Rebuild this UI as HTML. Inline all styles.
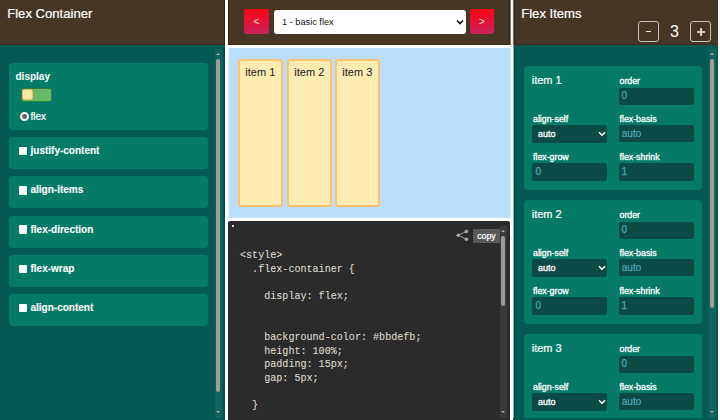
<!DOCTYPE html>
<html><head><meta charset="utf-8">
<style>
html,body{margin:0;padding:0;width:720px;height:420px;overflow:hidden;background:#fff;}
.b{position:absolute;box-sizing:border-box;}
.t{position:absolute;white-space:nowrap;line-height:1;}
body{font-family:"Liberation Sans", sans-serif;}
</style></head><body>
<div class="b" style="left:0px;top:0px;width:225px;height:420px;background:#035a55;"></div>
<div class="b" style="left:0px;top:0px;width:225px;height:45px;background:#463724;"></div>
<div class="t" style="left:7.2px;top:6.81px;font-size:13.1px;color:#fff;font-weight:normal;font-family:'Liberation Sans', sans-serif;-webkit-text-stroke:0.2px #fff;">Flex Container</div>
<div class="b" style="left:9px;top:62.5px;width:199px;height:67px;background:#047a67;border-radius:4px;"></div>
<div class="t" style="left:15.5px;top:71.94px;font-size:10px;color:#fff;font-weight:bold;font-family:'Liberation Sans', sans-serif;">display</div>
<div class="b" style="left:20.9px;top:87.7px;width:31.3px;height:14.4px;background:#66bb6a;border:1px solid #2f7d36;border-radius:2.5px;"></div>
<div class="b" style="left:22.3px;top:89.2px;width:10.8px;height:11.3px;background:#ffe7a6;border:1px solid #f0b860;border-radius:2.5px;"></div>
<div class="b" style="left:19.9px;top:111.9px;width:8.8px;height:8.8px;background:#666262;border:2.1px solid #faf4f4;border-radius:50%;"></div>
<div class="t" style="left:30.5px;top:111.94px;font-size:10px;color:#fff;font-weight:normal;font-family:'Liberation Sans', sans-serif;-webkit-text-stroke:0.2px #fff;">flex</div>
<div class="b" style="left:9px;top:137.0px;width:199px;height:32px;background:#047a67;border-radius:4px;"></div>
<div class="b" style="left:19px;top:146.8px;width:8.3px;height:8.5px;background:#fff;border-radius:1px;"></div>
<div class="t" style="left:30.5px;top:146.03px;font-size:10px;color:#fff;font-weight:bold;font-family:'Liberation Sans', sans-serif;-webkit-text-stroke:0.1px #fff;">justify-content</div>
<div class="b" style="left:9px;top:176.2px;width:199px;height:32px;background:#047a67;border-radius:4px;"></div>
<div class="b" style="left:19px;top:186.1px;width:8.3px;height:8.5px;background:#fff;border-radius:1px;"></div>
<div class="t" style="left:30.5px;top:185.28px;font-size:10px;color:#fff;font-weight:bold;font-family:'Liberation Sans', sans-serif;-webkit-text-stroke:0.1px #fff;">align-items</div>
<div class="b" style="left:9px;top:215.5px;width:199px;height:32px;background:#047a67;border-radius:4px;"></div>
<div class="b" style="left:19px;top:225.3px;width:8.3px;height:8.5px;background:#fff;border-radius:1px;"></div>
<div class="t" style="left:30.5px;top:224.53px;font-size:10px;color:#fff;font-weight:bold;font-family:'Liberation Sans', sans-serif;-webkit-text-stroke:0.1px #fff;">flex-direction</div>
<div class="b" style="left:9px;top:254.8px;width:199px;height:32px;background:#047a67;border-radius:4px;"></div>
<div class="b" style="left:19px;top:264.6px;width:8.3px;height:8.5px;background:#fff;border-radius:1px;"></div>
<div class="t" style="left:30.5px;top:263.79px;font-size:10px;color:#fff;font-weight:bold;font-family:'Liberation Sans', sans-serif;-webkit-text-stroke:0.1px #fff;">flex-wrap</div>
<div class="b" style="left:9px;top:294.0px;width:199px;height:32px;background:#047a67;border-radius:4px;"></div>
<div class="b" style="left:19px;top:303.8px;width:8.3px;height:8.5px;background:#fff;border-radius:1px;"></div>
<div class="t" style="left:30.5px;top:303.04px;font-size:10px;color:#fff;font-weight:bold;font-family:'Liberation Sans', sans-serif;-webkit-text-stroke:0.1px #fff;">align-content</div>
<div class="b" style="left:215px;top:48.5px;width:7px;height:369.0px;background:rgba(255,255,255,0.06);"></div>
<div class="b" style="left:216px;top:52.5px;width:0;height:0;border-left:2.3px solid transparent;border-right:2.3px solid transparent;border-bottom:2.6px solid #b8b0b0;"></div>
<div class="b" style="left:216px;top:410.5px;width:0;height:0;border-left:2.3px solid transparent;border-right:2.3px solid transparent;border-top:2.6px solid #b8b0b0;"></div>
<div class="b" style="left:216.2px;top:59.1px;width:4px;height:333.3px;background:#a29c9c;border-radius:2px;"></div>
<div class="b" style="left:228px;top:0px;width:282px;height:45px;background:#463724;"></div>
<div class="b" style="left:228px;top:48px;width:282px;height:170px;background:#bbdefb;"></div>
<div class="b" style="left:510px;top:48px;width:1px;height:170px;background:#ddeefd;"></div>
<div class="b" style="left:510px;top:0px;width:1px;height:45px;background:#a39b92;"></div>
<div class="b" style="left:238.0px;top:58.6px;width:45px;height:148.6px;background:#ffecb3;border:2px solid #ffc070;border-radius:3.5px;"></div>
<div class="t" style="left:245.3px;top:67.39px;font-size:11px;color:#1a1a1a;font-weight:normal;font-family:'Liberation Sans', sans-serif;">item 1</div>
<div class="b" style="left:287.0px;top:58.6px;width:45px;height:148.6px;background:#ffecb3;border:2px solid #ffc070;border-radius:3.5px;"></div>
<div class="t" style="left:294.3px;top:67.39px;font-size:11px;color:#1a1a1a;font-weight:normal;font-family:'Liberation Sans', sans-serif;">item 2</div>
<div class="b" style="left:335.0px;top:58.6px;width:45px;height:148.6px;background:#ffecb3;border:2px solid #ffc070;border-radius:3.5px;"></div>
<div class="t" style="left:342.3px;top:67.39px;font-size:11px;color:#1a1a1a;font-weight:normal;font-family:'Liberation Sans', sans-serif;">item 3</div>
<div class="b" style="left:244px;top:9px;width:25px;height:25px;background:linear-gradient(#ff0010,#c8245c);border-radius:2px;"></div>
<div class="t" style="left:253.5px;top:16.54px;font-size:10px;color:#ffe8d0;font-weight:normal;font-family:'Liberation Sans', sans-serif;">&lt;</div>
<div class="b" style="left:470px;top:9px;width:24px;height:25px;background:linear-gradient(#ff0010,#c8245c);border-radius:2px;"></div>
<div class="t" style="left:479px;top:16.54px;font-size:10px;color:#ffe8d0;font-weight:normal;font-family:'Liberation Sans', sans-serif;">&gt;</div>
<div class="b" style="left:273.5px;top:9.5px;width:192px;height:24.5px;background:#fff;border-radius:3px;"></div>
<div class="t" style="left:282.1px;top:18.21px;font-size:9.2px;color:#111;font-weight:normal;font-family:'Liberation Sans', sans-serif;">1 - basic flex</div>
<svg class="b" style="left:456px;top:17.5px" width="8" height="8" viewBox="0 0 8 8"><path d="M1 2.5 L4 5.5 L7 2.5" fill="none" stroke="#111" stroke-width="1.6"/></svg>
<div class="b" style="left:228px;top:221px;width:282px;height:199px;background:#2b2b2b;border-radius:2px 2px 0 0;"></div>
<div class="b" style="left:232px;top:225px;width:1.5px;height:1.5px;background:#ddd;"></div>
<div class="t" style="left:240px;top:251.47px;font-size:10.08px;color:#dedad0;font-weight:normal;font-family:'Liberation Mono', monospace;-webkit-text-stroke:0.1px #dedad0;">&lt;style&gt;</div>
<div class="t" style="left:240px;top:265.06px;font-size:10.08px;color:#dedad0;font-weight:normal;font-family:'Liberation Mono', monospace;-webkit-text-stroke:0.1px #dedad0;">&nbsp;&nbsp;.flex-container&nbsp;{</div>
<div class="t" style="left:240px;top:292.24px;font-size:10.08px;color:#dedad0;font-weight:normal;font-family:'Liberation Mono', monospace;-webkit-text-stroke:0.1px #dedad0;">&nbsp;&nbsp;&nbsp;&nbsp;display:&nbsp;flex;</div>
<div class="t" style="left:240px;top:333.01px;font-size:10.08px;color:#dedad0;font-weight:normal;font-family:'Liberation Mono', monospace;-webkit-text-stroke:0.1px #dedad0;">&nbsp;&nbsp;&nbsp;&nbsp;background-color:&nbsp;#bbdefb;</div>
<div class="t" style="left:240px;top:346.60px;font-size:10.08px;color:#dedad0;font-weight:normal;font-family:'Liberation Mono', monospace;-webkit-text-stroke:0.1px #dedad0;">&nbsp;&nbsp;&nbsp;&nbsp;height:&nbsp;100%;</div>
<div class="t" style="left:240px;top:360.19px;font-size:10.08px;color:#dedad0;font-weight:normal;font-family:'Liberation Mono', monospace;-webkit-text-stroke:0.1px #dedad0;">&nbsp;&nbsp;&nbsp;&nbsp;padding:&nbsp;15px;</div>
<div class="t" style="left:240px;top:373.78px;font-size:10.08px;color:#dedad0;font-weight:normal;font-family:'Liberation Mono', monospace;-webkit-text-stroke:0.1px #dedad0;">&nbsp;&nbsp;&nbsp;&nbsp;gap:&nbsp;5px;</div>
<div class="t" style="left:240px;top:400.96px;font-size:10.08px;color:#dedad0;font-weight:normal;font-family:'Liberation Mono', monospace;-webkit-text-stroke:0.1px #dedad0;">&nbsp;&nbsp;}</div>
<div class="b" style="left:473px;top:229px;width:26.5px;height:13.5px;background:#5a5a5a;"></div>
<div class="t" style="left:477.2px;top:231.65px;font-size:8.8px;color:#fff;font-weight:normal;font-family:'Liberation Sans', sans-serif;-webkit-text-stroke:0.2px #fff;">copy</div>
<svg class="b" style="left:456px;top:229px" width="13" height="13" viewBox="0 0 13 13"><g fill="#a4a4a4"><circle cx="10.4" cy="2.4" r="1.8"/><circle cx="2.3" cy="6.2" r="1.8"/><circle cx="10.4" cy="10.3" r="1.8"/></g><path d="M10.4 2.4 L2.3 6.2 L10.4 10.3" stroke="#a4a4a4" stroke-width="0.9" fill="none"/></svg>
<div class="b" style="left:500px;top:225.5px;width:7px;height:192.0px;background:#3a3a3a;"></div>
<div class="b" style="left:501px;top:229.5px;width:0;height:0;border-left:2.3px solid transparent;border-right:2.3px solid transparent;border-bottom:2.6px solid #aaa;"></div>
<div class="b" style="left:501px;top:410.5px;width:0;height:0;border-left:2.3px solid transparent;border-right:2.3px solid transparent;border-top:2.6px solid #aaa;"></div>
<div class="b" style="left:501.2px;top:235.6px;width:4px;height:70.19999999999999px;background:#9a9a9a;border-radius:2px;"></div>
<div class="b" style="left:513px;top:0px;width:205.5px;height:420px;background:#035a55;"></div>
<div class="b" style="left:513px;top:0px;width:205.5px;height:45px;background:#463724;"></div>
<div class="b" style="left:513px;top:45px;width:1px;height:375px;background:#82adaa;"></div>
<div class="b" style="left:513px;top:0px;width:1px;height:45px;background:#a39b92;"></div>
<div class="t" style="left:521.2px;top:6.81px;font-size:13.1px;color:#fff;font-weight:normal;font-family:'Liberation Sans', sans-serif;-webkit-text-stroke:0.2px #fff;">Flex Items</div>
<div class="b" style="left:638px;top:21px;width:21px;height:21px;background:transparent;border:1.5px solid #cdc5bb;border-radius:3px;"></div>
<div class="b" style="left:646.3px;top:30.5px;width:5px;height:1.6px;background:#f2eee8;"></div>
<div class="t" style="left:670px;top:23.86px;font-size:16px;color:#fff;font-weight:normal;font-family:'Liberation Sans', sans-serif;">3</div>
<div class="b" style="left:690px;top:21px;width:21px;height:21px;background:transparent;border:1.5px solid #cdc5bb;border-radius:3px;"></div>
<svg class="b" style="left:696px;top:26.5px" width="10" height="10" viewBox="0 0 10 10"><path d="M5 1 V9 M1 5 H9" stroke="#f2eee8" stroke-width="1.6"/></svg>
<div class="b" style="left:524px;top:65.8px;width:178px;height:124px;background:#047a67;border-radius:4px;"></div>
<div class="t" style="left:531.7px;top:74.99px;font-size:11px;color:#fff;font-weight:normal;font-family:'Liberation Sans', sans-serif;-webkit-text-stroke:0.2px #fff;">item 1</div>
<div class="t" style="left:619.5px;top:76.75px;font-size:8.8px;color:#fff;font-weight:normal;font-family:'Liberation Sans', sans-serif;-webkit-text-stroke:0.3px #fff;">order</div>
<div class="b" style="left:618.7px;top:87.5px;width:75px;height:17.2px;background:#0c4a45;border-radius:2px;"></div>
<div class="t" style="left:621.5px;top:90.73px;font-size:10px;color:#4aa8b8;font-weight:normal;font-family:'Liberation Sans', sans-serif;-webkit-text-stroke:0.25px #4aa8b8;">0</div>
<div class="t" style="left:533px;top:115.05px;font-size:8.8px;color:#fff;font-weight:normal;font-family:'Liberation Sans', sans-serif;-webkit-text-stroke:0.3px #fff;">align-self</div>
<div class="b" style="left:532.3px;top:125.3px;width:75px;height:17.4px;background:#0c4a45;border-radius:2px;"></div>
<div class="t" style="left:538px;top:130.08px;font-size:9px;color:#fff;font-weight:normal;font-family:'Liberation Sans', sans-serif;-webkit-text-stroke:0.3px #fff;">auto</div>
<svg class="b" style="left:598px;top:130.8px" width="8" height="6" viewBox="0 0 8 6"><path d="M1 1.2 L4 4.2 L7 1.2" fill="none" stroke="#fff" stroke-width="1.5"/></svg>
<div class="t" style="left:619.5px;top:115.05px;font-size:8.8px;color:#fff;font-weight:normal;font-family:'Liberation Sans', sans-serif;-webkit-text-stroke:0.3px #fff;">flex-basis</div>
<div class="b" style="left:618.7px;top:125.3px;width:75px;height:17.2px;background:#0c4a45;border-radius:2px;"></div>
<div class="t" style="left:621.8px;top:128.63px;font-size:10px;color:#4aa8b8;font-weight:normal;font-family:'Liberation Sans', sans-serif;-webkit-text-stroke:0.25px #4aa8b8;">auto</div>
<div class="t" style="left:533px;top:152.55px;font-size:8.8px;color:#fff;font-weight:normal;font-family:'Liberation Sans', sans-serif;-webkit-text-stroke:0.3px #fff;">flex-grow</div>
<div class="b" style="left:532.3px;top:163.1px;width:75px;height:17.5px;background:#0c4a45;border-radius:2px;"></div>
<div class="t" style="left:535.5px;top:167.13px;font-size:10px;color:#4aa8b8;font-weight:normal;font-family:'Liberation Sans', sans-serif;-webkit-text-stroke:0.25px #4aa8b8;">0</div>
<div class="t" style="left:619.5px;top:152.55px;font-size:8.8px;color:#fff;font-weight:normal;font-family:'Liberation Sans', sans-serif;-webkit-text-stroke:0.3px #fff;">flex-shrink</div>
<div class="b" style="left:618.7px;top:163.1px;width:75px;height:17.5px;background:#0c4a45;border-radius:2px;"></div>
<div class="t" style="left:621.5px;top:167.13px;font-size:10px;color:#4aa8b8;font-weight:normal;font-family:'Liberation Sans', sans-serif;-webkit-text-stroke:0.25px #4aa8b8;">1</div>
<div class="b" style="left:524px;top:199.8px;width:178px;height:124px;background:#047a67;border-radius:4px;"></div>
<div class="t" style="left:531.7px;top:208.99px;font-size:11px;color:#fff;font-weight:normal;font-family:'Liberation Sans', sans-serif;-webkit-text-stroke:0.2px #fff;">item 2</div>
<div class="t" style="left:619.5px;top:210.75px;font-size:8.8px;color:#fff;font-weight:normal;font-family:'Liberation Sans', sans-serif;-webkit-text-stroke:0.3px #fff;">order</div>
<div class="b" style="left:618.7px;top:221.5px;width:75px;height:17.2px;background:#0c4a45;border-radius:2px;"></div>
<div class="t" style="left:621.5px;top:224.74px;font-size:10px;color:#4aa8b8;font-weight:normal;font-family:'Liberation Sans', sans-serif;-webkit-text-stroke:0.25px #4aa8b8;">0</div>
<div class="t" style="left:533px;top:249.05px;font-size:8.8px;color:#fff;font-weight:normal;font-family:'Liberation Sans', sans-serif;-webkit-text-stroke:0.3px #fff;">align-self</div>
<div class="b" style="left:532.3px;top:259.3px;width:75px;height:17.4px;background:#0c4a45;border-radius:2px;"></div>
<div class="t" style="left:538px;top:264.08px;font-size:9px;color:#fff;font-weight:normal;font-family:'Liberation Sans', sans-serif;-webkit-text-stroke:0.3px #fff;">auto</div>
<svg class="b" style="left:598px;top:264.8px" width="8" height="6" viewBox="0 0 8 6"><path d="M1 1.2 L4 4.2 L7 1.2" fill="none" stroke="#fff" stroke-width="1.5"/></svg>
<div class="t" style="left:619.5px;top:249.05px;font-size:8.8px;color:#fff;font-weight:normal;font-family:'Liberation Sans', sans-serif;-webkit-text-stroke:0.3px #fff;">flex-basis</div>
<div class="b" style="left:618.7px;top:259.3px;width:75px;height:17.2px;background:#0c4a45;border-radius:2px;"></div>
<div class="t" style="left:621.8px;top:262.64px;font-size:10px;color:#4aa8b8;font-weight:normal;font-family:'Liberation Sans', sans-serif;-webkit-text-stroke:0.25px #4aa8b8;">auto</div>
<div class="t" style="left:533px;top:286.55px;font-size:8.8px;color:#fff;font-weight:normal;font-family:'Liberation Sans', sans-serif;-webkit-text-stroke:0.3px #fff;">flex-grow</div>
<div class="b" style="left:532.3px;top:297.1px;width:75px;height:17.5px;background:#0c4a45;border-radius:2px;"></div>
<div class="t" style="left:535.5px;top:301.14px;font-size:10px;color:#4aa8b8;font-weight:normal;font-family:'Liberation Sans', sans-serif;-webkit-text-stroke:0.25px #4aa8b8;">0</div>
<div class="t" style="left:619.5px;top:286.55px;font-size:8.8px;color:#fff;font-weight:normal;font-family:'Liberation Sans', sans-serif;-webkit-text-stroke:0.3px #fff;">flex-shrink</div>
<div class="b" style="left:618.7px;top:297.1px;width:75px;height:17.5px;background:#0c4a45;border-radius:2px;"></div>
<div class="t" style="left:621.5px;top:301.14px;font-size:10px;color:#4aa8b8;font-weight:normal;font-family:'Liberation Sans', sans-serif;-webkit-text-stroke:0.25px #4aa8b8;">1</div>
<div class="b" style="left:524px;top:333.8px;width:178px;height:124px;background:#047a67;border-radius:4px;"></div>
<div class="t" style="left:531.7px;top:342.99px;font-size:11px;color:#fff;font-weight:normal;font-family:'Liberation Sans', sans-serif;-webkit-text-stroke:0.2px #fff;">item 3</div>
<div class="t" style="left:619.5px;top:344.75px;font-size:8.8px;color:#fff;font-weight:normal;font-family:'Liberation Sans', sans-serif;-webkit-text-stroke:0.3px #fff;">order</div>
<div class="b" style="left:618.7px;top:355.5px;width:75px;height:17.2px;background:#0c4a45;border-radius:2px;"></div>
<div class="t" style="left:621.5px;top:358.74px;font-size:10px;color:#4aa8b8;font-weight:normal;font-family:'Liberation Sans', sans-serif;-webkit-text-stroke:0.25px #4aa8b8;">0</div>
<div class="t" style="left:533px;top:383.05px;font-size:8.8px;color:#fff;font-weight:normal;font-family:'Liberation Sans', sans-serif;-webkit-text-stroke:0.3px #fff;">align-self</div>
<div class="b" style="left:532.3px;top:393.3px;width:75px;height:17.4px;background:#0c4a45;border-radius:2px;"></div>
<div class="t" style="left:538px;top:398.08px;font-size:9px;color:#fff;font-weight:normal;font-family:'Liberation Sans', sans-serif;-webkit-text-stroke:0.3px #fff;">auto</div>
<svg class="b" style="left:598px;top:398.8px" width="8" height="6" viewBox="0 0 8 6"><path d="M1 1.2 L4 4.2 L7 1.2" fill="none" stroke="#fff" stroke-width="1.5"/></svg>
<div class="t" style="left:619.5px;top:383.05px;font-size:8.8px;color:#fff;font-weight:normal;font-family:'Liberation Sans', sans-serif;-webkit-text-stroke:0.3px #fff;">flex-basis</div>
<div class="b" style="left:618.7px;top:393.3px;width:75px;height:17.2px;background:#0c4a45;border-radius:2px;"></div>
<div class="t" style="left:621.8px;top:396.64px;font-size:10px;color:#4aa8b8;font-weight:normal;font-family:'Liberation Sans', sans-serif;-webkit-text-stroke:0.25px #4aa8b8;">auto</div>
<div class="t" style="left:533px;top:420.55px;font-size:8.8px;color:#fff;font-weight:normal;font-family:'Liberation Sans', sans-serif;-webkit-text-stroke:0.3px #fff;">flex-grow</div>
<div class="b" style="left:532.3px;top:431.1px;width:75px;height:17.5px;background:#0c4a45;border-radius:2px;"></div>
<div class="t" style="left:535.5px;top:435.14px;font-size:10px;color:#4aa8b8;font-weight:normal;font-family:'Liberation Sans', sans-serif;-webkit-text-stroke:0.25px #4aa8b8;">0</div>
<div class="t" style="left:619.5px;top:420.55px;font-size:8.8px;color:#fff;font-weight:normal;font-family:'Liberation Sans', sans-serif;-webkit-text-stroke:0.3px #fff;">flex-shrink</div>
<div class="b" style="left:618.7px;top:431.1px;width:75px;height:17.5px;background:#0c4a45;border-radius:2px;"></div>
<div class="t" style="left:621.5px;top:435.14px;font-size:10px;color:#4aa8b8;font-weight:normal;font-family:'Liberation Sans', sans-serif;-webkit-text-stroke:0.25px #4aa8b8;">1</div>
<div class="b" style="left:513px;top:417.5px;width:196px;height:2.5px;background:#035a55;"></div>
<div class="b" style="left:0px;top:44px;width:225px;height:1px;background:#3a2c18;"></div>
<div class="b" style="left:514px;top:44px;width:205px;height:1px;background:#3a2c18;"></div>
<div class="b" style="left:228px;top:44px;width:282px;height:1px;background:#3a2c18;"></div>
<div class="b" style="left:224px;top:0px;width:1px;height:45px;background:#2e2210;"></div>
<div class="b" style="left:228px;top:0px;width:1px;height:44px;background:#2e2210;"></div>
<div class="b" style="left:509px;top:0px;width:1px;height:44px;background:#2e2210;"></div>
<div class="b" style="left:510px;top:0px;width:1px;height:45px;background:#8a8070;"></div>
<div class="b" style="left:512px;top:0px;width:1px;height:45px;background:#ece8e4;"></div>
<div class="b" style="left:513px;top:0px;width:1px;height:45px;background:#80786a;"></div>
<div class="b" style="left:514px;top:0px;width:1px;height:44px;background:#2e2210;"></div>
<div class="b" style="left:224px;top:45px;width:1px;height:375px;background:#024a45;"></div>
<div class="b" style="left:514px;top:45px;width:1px;height:375px;background:#024a45;"></div>
<div class="b" style="left:228px;top:48px;width:1px;height:170px;background:#e2f1fe;"></div>
<div class="b" style="left:709px;top:48.5px;width:7px;height:369.0px;background:rgba(255,255,255,0.06);"></div>
<div class="b" style="left:710px;top:52.5px;width:0;height:0;border-left:2.3px solid transparent;border-right:2.3px solid transparent;border-bottom:2.6px solid #b8b0b0;"></div>
<div class="b" style="left:710px;top:410.5px;width:0;height:0;border-left:2.3px solid transparent;border-right:2.3px solid transparent;border-top:2.6px solid #b8b0b0;"></div>
<div class="b" style="left:710.2px;top:59.1px;width:4px;height:248.5px;background:#a29c9c;border-radius:2px;"></div>
<div class="b" style="left:718.3px;top:0px;width:1.7px;height:420px;background:#fff;"></div>
</body></html>
